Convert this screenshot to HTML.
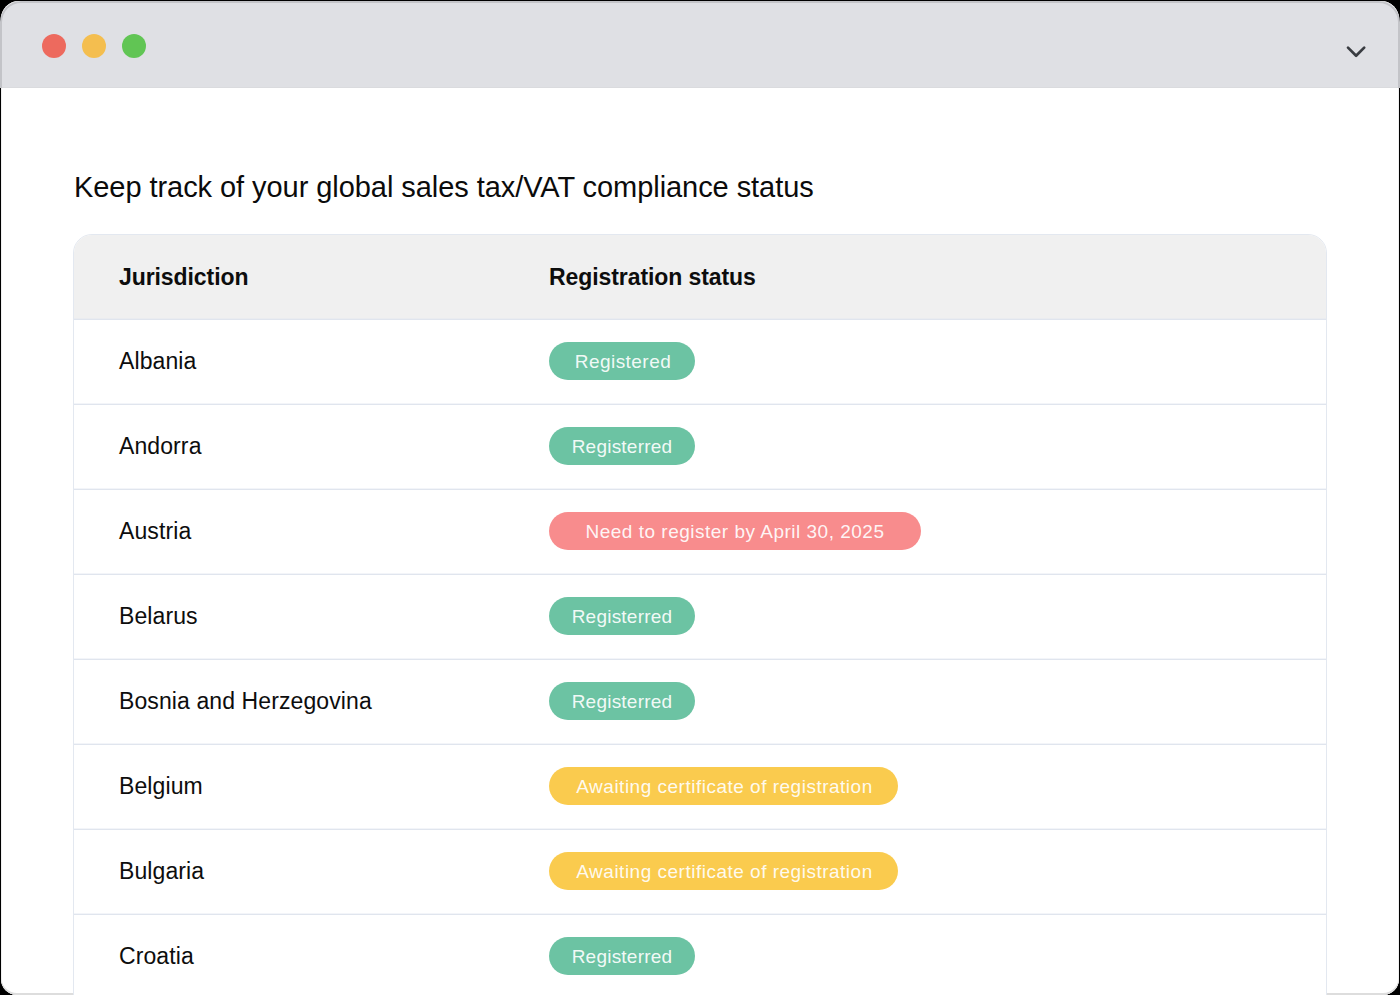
<!DOCTYPE html>
<html>
<head>
<meta charset="utf-8">
<style>
html,body{margin:0;padding:0;}
body{width:1400px;height:995px;background:#000;overflow:hidden;position:relative;font-family:"Liberation Sans",sans-serif;}
.win{position:absolute;left:1px;top:1px;width:1398px;height:994px;border-radius:18px 18px 16px 16px;overflow:hidden;background:#fff;box-shadow:inset 0 -2px 0 #dddddd, inset 1px 0 0 #f0f0f0, inset -1px 0 0 #f0f0f0;}
.bar{position:absolute;left:0;top:1px;width:1400px;height:87px;background:#dfe0e4;box-sizing:border-box;border:2px solid #c3c4c8;border-bottom:none;border-radius:21px 21px 0 0;}
.bar .sep{position:absolute;left:0;right:0;bottom:0;height:1px;background:#dadbde;}
.dot{position:absolute;top:30.7px;width:24px;height:24px;border-radius:50%;}
.content{position:absolute;left:1px;top:87px;width:1398px;height:906px;background:#fff;}
.title{position:absolute;left:74px;top:171px;font-size:29px;letter-spacing:-0.06px;color:#0b0b0b;white-space:nowrap;line-height:32px;}
.tbl{position:absolute;left:73px;top:234px;width:1254px;height:800px;box-sizing:border-box;border:1px solid #e3e8f0;border-radius:19px;overflow:hidden;background:#fff;}
.hdr{position:absolute;left:0;top:0;right:0;height:84px;background:#f0f0f0;border-bottom:1px solid #e0e5ee;box-shadow:inset 0 -1px 0 #eaecf0;}
.row{position:absolute;left:0;right:0;height:84px;border-bottom:1px solid #e0e5ee;box-shadow:inset 0 -1px 0 #f3f5f9;}
.cell{position:absolute;left:45px;white-space:nowrap;font-size:23px;letter-spacing:0.1px;color:#0d0d0d;line-height:26px;}
.hcell{font-weight:bold;letter-spacing:-0.08px;}
.badge{position:absolute;left:475px;top:22px;height:38px;border-radius:19px;color:rgba(255,255,255,0.93);font-size:19px;letter-spacing:0.5px;line-height:39px;text-align:center;white-space:nowrap;}
.g{background:#6cc3a3;width:146px;}
.r{background:#f88c8d;width:372px;}
.y{background:#facb4e;width:349px;}
</style>
</head>
<body>
<div class="win"></div>
  <div class="bar"><div class="sep"></div>
    <div class="dot" style="left:40px;background:#ed6a5e;"></div>
    <div class="dot" style="left:80px;background:#f4be4f;"></div>
    <div class="dot" style="left:120px;background:#61c554;"></div>
    <svg style="position:absolute;left:1338px;top:35px" width="32" height="24" viewBox="0 0 32 24">
      <path d="M8 9.6 L16.1 17.8 L24.2 9.6" fill="none" stroke="#393c41" stroke-width="2.7" stroke-linecap="round" stroke-linejoin="round"/>
    </svg>
  </div>
<div class="title">Keep track of your global sales tax/VAT compliance status</div>
<div class="tbl">
  <div class="hdr"><div class="cell hcell" style="top:29px">Jurisdiction</div><div class="cell hcell" style="left:475px;top:29px">Registration status</div></div>
  <div class="row" style="top:85px"><div class="cell" style="top:28px">Albania</div><div class="badge g" style="letter-spacing:0.45px;padding-left:2px;box-sizing:border-box">Registered</div></div>
  <div class="row" style="top:170px"><div class="cell" style="top:28px">Andorra</div><div class="badge g" style="letter-spacing:0.22px;padding-left:0px;box-sizing:border-box">Registerred</div></div>
  <div class="row" style="top:255px"><div class="cell" style="top:28px">Austria</div><div class="badge r">Need to register by April 30, 2025</div></div>
  <div class="row" style="top:340px"><div class="cell" style="top:28px">Belarus</div><div class="badge g" style="letter-spacing:0.22px;padding-left:0px;box-sizing:border-box">Registerred</div></div>
  <div class="row" style="top:425px"><div class="cell" style="top:28px">Bosnia and Herzegovina</div><div class="badge g" style="letter-spacing:0.22px;padding-left:0px;box-sizing:border-box">Registerred</div></div>
  <div class="row" style="top:510px"><div class="cell" style="top:28px">Belgium</div><div class="badge y" style="padding-left:2px;box-sizing:border-box">Awaiting certificate of registration</div></div>
  <div class="row" style="top:595px"><div class="cell" style="top:28px">Bulgaria</div><div class="badge y" style="padding-left:2px;box-sizing:border-box">Awaiting certificate of registration</div></div>
  <div class="row" style="top:680px"><div class="cell" style="top:28px">Croatia</div><div class="badge g" style="letter-spacing:0.22px;padding-left:0px;box-sizing:border-box">Registerred</div></div>
</div>
</body>
</html>
